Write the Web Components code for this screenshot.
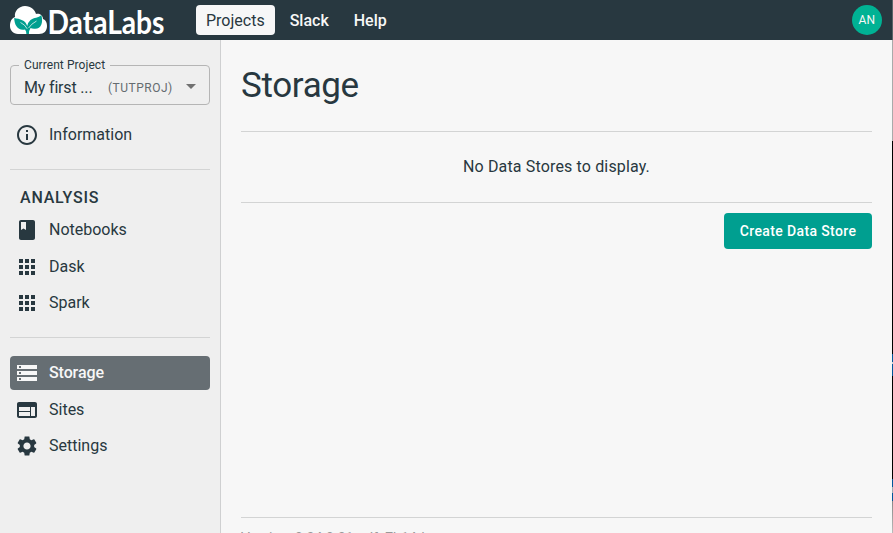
<!DOCTYPE html>
<html lang="en"><head><meta charset="utf-8"><title>DataLabs - Storage</title>
<style>
html,body{margin:0;height:100%;overflow:hidden}
body{font-family:Roboto,"Liberation Sans",sans-serif;color:#283840;background:#f7f7f7}
</style></head><body>
<datalabs-app></datalabs-app>
<script>
const define=(name,html,setup)=>customElements.define(name,class extends HTMLElement{
  constructor(){super();this.attachShadow({mode:'open'});}
  connectedCallback(){this.shadowRoot.innerHTML=html;if(setup)setup(this,this.shadowRoot);}
});
const ICONS={
 info:'M11 7h2v2h-2zm0 4h2v6h-2zm1-9C6.48 2 2 6.48 2 12s4.48 10 10 10 10-4.48 10-10S17.52 2 12 2zm0 18c-4.41 0-8-3.59-8-8s3.59-8 8-8 8 3.59 8 8-3.59 8-8 8z',
 book:'M18 2H6c-1.1 0-2 .9-2 2v16c0 1.1.9 2 2 2h12c1.1 0 2-.9 2-2V4c0-1.1-.9-2-2-2zM6 4h5v8l-2.5-1.5L6 12V4z',
 apps:'M4 8h4V4H4v4zm6 12h4v-4h-4v4zm-6 0h4v-4H4v4zm0-6h4v-4H4v4zm6 0h4v-4h-4v4zm6-10v4h4V4h-4zm-6 4h4V4h-4v4zm6 6h4v-4h-4v4zm0 6h4v-4h-4v4z',
 storage:'M2 20h20v-4H2v4zm2-3h2v2H4v-2zM2 4v4h20V4H2zm4 3H4V5h2v2zm-4 7h20v-4H2v4zm2-3h2v2H4v-2z',
 web:'M20 4H4c-1.1 0-1.99.9-1.99 2L2 18c0 1.1.9 2 2 2h16c1.1 0 2-.9 2-2V6c0-1.1-.9-2-2-2zm-5 14H4v-4h11v4zm0-5H4V9h11v4zm5 5h-4V9h4v9z',
 settings:'M19.14 12.94c.04-.3.06-.61.06-.94 0-.32-.02-.64-.07-.94l2.03-1.58c.18-.14.23-.41.12-.61l-1.92-3.32c-.12-.22-.37-.29-.59-.22l-2.39.96c-.5-.38-1.03-.7-1.62-.94l-.36-2.54c-.04-.24-.24-.41-.48-.41h-3.84c-.24 0-.43.17-.47.41l-.36 2.54c-.59.24-1.13.57-1.62.94l-2.39-.96c-.22-.08-.47 0-.59.22L2.74 8.87c-.12.21-.08.47.12.61l2.03 1.58c-.05.3-.09.63-.09.94s.02.64.07.94l-2.03 1.58c-.18.14-.23.41-.12.61l1.92 3.32c.12.22.37.29.59.22l2.39-.96c.5.38 1.03.7 1.62.94l.36 2.54c.05.24.24.41.48.41h3.84c.24 0 .44-.17.47-.41l.36-2.54c.59-.24 1.13-.56 1.62-.94l2.39.96c.22.08.47 0 .59-.22l1.92-3.32c.12-.22.07-.47-.12-.61l-2.01-1.58zM12 15.6c-1.98 0-3.6-1.62-3.6-3.6s1.62-3.6 3.6-3.6 3.6 1.62 3.6 3.6-1.62 3.6-3.6 3.6z',
 down:'M7 10l5 5 5-5z'};
define('dl-icon','<style>:host{display:block;width:24px;height:24px;flex:none}svg{display:block}</style><svg width="24" height="24" viewBox="0 0 24 24" fill="currentColor"><path/></svg>',
 (el,r)=>r.querySelector('path').setAttribute('d',ICONS[el.getAttribute('name')]));
define('dl-logo',`<style>:host{display:block;width:156px;height:40px}svg{display:block;overflow:visible}text{font:bold 33px Lato,sans-serif}</style>
<svg width="156" height="40" viewBox="0 0 156 40">
<path fill="#fff" d="M8 34C3 34 0 30 0 26c0-5 2-8 5-9C4 11 9 6 15 6c6 0 10 4 11 8 3-1 7 1 7 5 3 1 4 4 4 7 0 5-3 8-8 8z"/>
<path fill="#009f90" d="M4.200 18C10 19 15.500 20 17.200 26Q18.200 22 20.500 20C24 17.500 28.500 18 31.300 15C33.500 23 31 29 25 28.800Q22 29 20.600 28Q19 30 18.900 34H16.400Q16.400 31 15 29.500C8 31 4.500 25.500 4.200 18z"/>
<path d="M10.500 22.500Q15 24.500 17.200 28.800M26.500 21Q21 24 18.600 28" fill="none" stroke="#fff" stroke-width=".7"/>
<text x="37.500" y="33.600" fill="#fff" textLength="117" lengthAdjust="spacingAndGlyphs">DataLabs</text></svg>`);
define('dl-tab',`<style>:host{display:block;box-sizing:border-box;height:30px;padding:0 10px;border-radius:4px;color:#f7f7f7;font:500 16px/32px Roboto,sans-serif}:host([active]){background:#f7f7f7;color:#283840;font-weight:400}</style><slot></slot>`);
define('dl-topbar',`<style>:host{display:flex;align-items:center;height:40px;padding:0 10px;background:#283840;box-sizing:border-box}
nav{display:flex;margin-left:30px;gap:5px}.avatar{margin-left:auto;width:30px;height:30px;border-radius:50%;background:#00b294;color:#f7f7f7;text-align:center;font:12px/30px Roboto,sans-serif;letter-spacing:.2px}</style>
<dl-logo></dl-logo><nav><dl-tab active>Projects</dl-tab><dl-tab>Slack</dl-tab><dl-tab>Help</dl-tab></nav><div class="avatar">AN</div>`);
define('dl-project-select',`<style>:host{display:block;height:47px}
fieldset{box-sizing:border-box;height:47px;margin:0;padding:0 6px 0 13px;border:1px solid #b5b5b5;border-radius:4px;min-width:0}
legend{font:12px/14px Roboto,sans-serif;padding:0 5px;margin-left:-5px;letter-spacing:.07px}
div{display:flex;align-items:center;height:30px}.name{width:84px;font-size:16px;letter-spacing:-.17px}.key{font-size:12px;color:#656b70;letter-spacing:.5px;padding-top:1px}dl-icon{margin:-3px 0 0 auto;color:#717171}</style>
<fieldset><legend>Current Project</legend><div><span class="name">My first ...</span><span class="key">(TUTPROJ)</span><dl-icon name="down"></dl-icon></div></fieldset>`);
define('dl-nav-item',`<style>:host{display:flex;align-items:center;box-sizing:border-box;height:34px;padding-left:5px;gap:10px;border-radius:4px;font-size:16px}span{margin-bottom:2px}:host([low]) span{margin-bottom:0}:host([active]){background:#666e73;color:#f7f7f7;font-weight:500;letter-spacing:-.1px}</style><dl-icon></dl-icon><span><slot></slot></span>`,
 (el,r)=>{const o=r.querySelector('dl-icon'),i=document.createElement('dl-icon');i.setAttribute('name',el.getAttribute('icon'));o.replaceWith(i);});
define('dl-rule','<style>:host{display:block;height:1px;background:#d3d4d4}</style>');
define('dl-sidebar',`<style>:host{display:block;box-sizing:border-box;width:221px;padding:18px 10px 0;background:#efefef;border-right:1px solid #cfd0d1}
.group{display:grid;row-gap:2.500px}.info{margin:13px 0 17px}h2{margin:18px 0 5px 10px;font:500 16px/20px Roboto,sans-serif;letter-spacing:.8px}.last{margin-top:18px}.analysis{margin-bottom:17px}</style>
<dl-project-select></dl-project-select><dl-nav-item class="info" icon="info">Information</dl-nav-item><dl-rule></dl-rule>
<h2>ANALYSIS</h2><div class="group analysis"><dl-nav-item icon="book">Notebooks</dl-nav-item><dl-nav-item icon="apps" low>Dask</dl-nav-item><dl-nav-item icon="apps">Spark</dl-nav-item></div><dl-rule></dl-rule>
<div class="group last"><dl-nav-item icon="storage" active>Storage</dl-nav-item><dl-nav-item icon="web" low>Sites</dl-nav-item><dl-nav-item icon="settings">Settings</dl-nav-item></div>`);
define('dl-button',`<style>:host{display:block;box-sizing:border-box;width:148px;height:36px;background:#009f90;color:#fff;border-radius:4px;text-align:center;font:500 14px/36px Roboto,sans-serif;letter-spacing:.37px}</style><slot></slot>`);
define('dl-storage-page',`<style>:host{display:flex;flex-direction:column;flex:1;min-width:0;padding:0 20px}
h1{margin:21px 0 20px;height:50px;font:400 35px/50px Roboto,sans-serif;letter-spacing:-.35px}p{margin:0;height:70px;line-height:70px;text-align:center;font-size:16px;letter-spacing:.15px}dl-button{align-self:flex-end;margin-top:10px}footer{margin-top:auto;height:16px;overflow:hidden;font-size:14px;line-height:41px;color:#999;white-space:nowrap}</style>
<h1>Storage</h1><dl-rule></dl-rule><p>No Data Stores to display.</p><dl-rule></dl-rule><dl-button>Create Data Store</dl-button><footer><dl-rule></dl-rule>Version: 0.34.0-31-gdfe7b14d</footer>`);
define('dl-edge',`<style>:host{display:block;width:1px;background:linear-gradient(#5a6468 0 40px,#aaa 40px 141px,#000 141px 354px,#00569b 354px 362px,#c5d0d6 362px 364px,#00569b 364px 376px,#000 376px 479px,#00569b 479px 487px,#9aa9b2 487px 493px,#00569b 493px 501px,#888 501px,#bbb)}</style>`);
define('datalabs-app',`<style>:host{display:flex;width:893px;height:533px}.window{display:flex;flex-direction:column;width:892px}main{display:flex;flex:1;min-height:0}</style>
<div class="window"><dl-topbar></dl-topbar><main><dl-sidebar></dl-sidebar><dl-storage-page></dl-storage-page></main></div><dl-edge></dl-edge>`);
</script></body></html>
